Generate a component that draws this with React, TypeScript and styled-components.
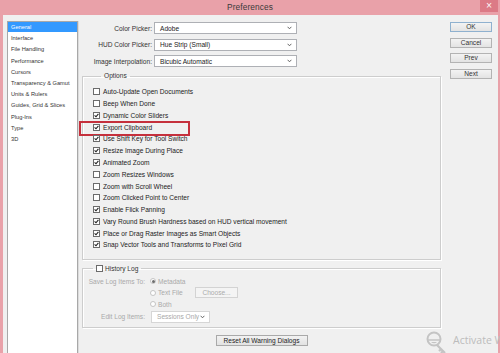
import React from 'react';
import styled, { createGlobalStyle } from 'styled-components';

const Global = createGlobalStyle`
  html, body { margin: 0; padding: 0; }
  body {
    width: 500px; height: 353px; overflow: hidden;
    background: #e9a1a9;
    font-family: "Liberation Sans", Arial, sans-serif;
  }
`;

const Window = styled.div`
  width: 500px; height: 353px; position: relative; overflow: hidden;
  display: flex; flex-direction: column; background: #e9a1a9;
`;

const TitleBar = styled.div`
  height: 15px; flex: none;
  display: grid; grid-template-columns: 1fr auto 1fr; align-items: start;
`;

const Title = styled.div`
  grid-column: 2; font-size: 8.3px; color: #3a3a3a; line-height: 15px; letter-spacing: 0.1px;
`;

const CloseBtn = styled.div`
  grid-column: 3; justify-self: end; margin-right: 2px;
  width: 18px; height: 12px; background: #dc7a86; color: #fff;
  font-size: 8px; line-height: 11px; text-align: center; font-family: "DejaVu Sans", sans-serif;
`;

const Body = styled.div`
  flex: 1; min-height: 0; margin: 0 2px 0 3px;
  background: #f0f0f0; display: flex; padding: 6px 0 0 4px;
`;

const Sidebar = styled.div`
  width: 69px; flex: none; background: #fff; border: 1px solid #a8a8a8;
  border-bottom: none; display: flex; flex-direction: column; gap: 1.2px;
  box-shadow: 1px 0 0 #dcdcdc;
`;

const SideItem = styled.div<{ $sel?: boolean }>`
  height: 10px; line-height: 10px; font-size: 5.7px; padding-left: 3px;
  color: ${p => (p.$sel ? '#fff' : '#333')};
  background: ${p => (p.$sel ? '#3399ff' : 'transparent')};
  white-space: nowrap;
`;

const Main = styled.div`
  width: 359px; flex: none; margin-left: 4px; padding-top: 1px;
  display: flex; flex-direction: column;
`;

const FieldRow = styled.div`
  display: grid; grid-template-columns: 70px 143px; column-gap: 2px;
  align-items: center; height: 12px; margin-bottom: 4.5px;
`;

const FieldLabel = styled.div`
  text-align: right; font-size: 6.6px; color: #333; white-space: nowrap;
`;

const Select = styled.div<{ $disabled?: boolean; $w?: number }>`
  height: 12px; box-sizing: border-box; background: #fff;
  border: 1px solid ${p => (p.$disabled ? '#d6d6d6' : '#aeb0b5')};
  display: flex; align-items: center; justify-content: space-between;
  padding: 0 4px 0 5px; font-size: 6.6px;
  color: ${p => (p.$disabled ? '#a8a8a8' : '#222')};
  width: ${p => (p.$w ? `${p.$w}px` : 'auto')};
`;

const Group = styled.fieldset<{ $top: number }>`
  margin: ${p => p.$top}px 0 0 0; min-width: 0;
  border: 1px solid #cdcdcd; box-shadow: inset 1px 1px 0 #fff, 1px 1px 0 #fff;
  box-sizing: border-box;
`;

const OptionsGroup = styled(Group)`
  padding: 6px 0 8px 10px;
`;

const HistoryGroup = styled(Group)`
  padding: 3px 0 3.5px 0;
`;

const Legend = styled.legend<{ $ml: number }>`
  margin-left: ${p => p.$ml}px; padding: 0 3px; font-size: 6.6px; color: #333;
  line-height: 8px; height: 8px; display: flex; align-items: center; gap: 2px;
`;

const CheckRow = styled.div<{ $hl?: boolean }>`
  position: relative; display: flex; align-items: center; gap: 3px;
  height: 11.77px; font-size: 6.6px; color: #222; white-space: nowrap;
  ${p =>
    p.$hl &&
    `&::before {
      content: ''; position: absolute; left: -14px; top: -0.5px;
      width: 107px; height: 11px; border: 2px solid #c5303c;
    }`}
`;

const BoxEl = styled.span`
  width: 7px; height: 7px; box-sizing: border-box; flex: none;
  border: 1px solid #6b6b6b; background: #fff;
  display: inline-flex; align-items: center; justify-content: center;
`;

const Check = ({ on }: { on: boolean }) => (
  <BoxEl>
    {on && (
      <svg width="5" height="5" viewBox="0 0 5 5">
        <path d="M0.6 2.4 L2 3.8 L4.4 0.8" fill="none" stroke="#222" strokeWidth="1.1" />
      </svg>
    )}
  </BoxEl>
);

const HistGrid = styled.div`
  display: grid; grid-template-columns: 62px 40px auto 1fr; column-gap: 5px;
  grid-template-rows: 11.5px 11.5px 11.5px 13px; align-items: center;
  font-size: 6.6px; color: #a9a9a9; white-space: nowrap;
`;

const HistLabel = styled.div`
  text-align: right; grid-column: 1;
`;

const RadioItem = styled.div`
  grid-column: 2; display: flex; align-items: center; gap: 2px;
`;

const RadioDot = styled.span<{ $on?: boolean }>`
  width: 6px; height: 6px; border-radius: 50%; box-sizing: border-box; flex: none;
  border: 1px solid #c4c4c4; background: #fff;
  display: inline-flex; align-items: center; justify-content: center;
  &::after {
    content: ''; width: 3px; height: 3px; border-radius: 50%;
    background: ${p => (p.$on ? '#6e6e6e' : 'transparent')};
  }
`;

const ChooseBtn = styled.div`
  grid-column: 3; width: 43px; height: 11px; box-sizing: border-box;
  border: 1px solid #d3d3d3; background: #f4f4f4; text-align: center;
  line-height: 9px; color: #ababab;
`;

const SessionSelect = styled(Select)`
  grid-column: 2 / span 3; margin-left: 1px;
`;

const ResetBtn = styled.div`
  align-self: center; margin-top: 7px; width: 92px; height: 11px; box-sizing: border-box;
  border: 1px solid #a9a9a9; background: linear-gradient(#f2f2f2, #e2e2e2);
  font-size: 6.6px; color: #222; text-align: center; line-height: 9px;
`;

const ButtonCol = styled.div`
  width: 42px; flex: none; margin-left: 9px; padding-top: 1px;
  display: flex; flex-direction: column; gap: 5.6px;
`;

const DlgBtn = styled.div<{ $def?: boolean }>`
  height: 10px; box-sizing: border-box;
  border: 1px solid ${p => (p.$def ? '#8fb1cf' : '#b3b3b3')};
  background: linear-gradient(#f3f3f3, #e3e3e3);
  font-size: 6.6px; color: #333; text-align: center; line-height: 8px;
`;

const Watermark = styled.div`
  position: absolute; left: 423px; top: 331px; display: flex; align-items: flex-start; gap: 6px;
  color: #bcbcbc; font-family: "Open Sans", "Liberation Sans", sans-serif;
  font-size: 10.5px; line-height: 12px; white-space: nowrap; pointer-events: none;
`;

const WMText = styled.div`
  margin-top: 3px;
`;

const Chevron = () => (
  <svg width="5" height="4" viewBox="0 0 5 4">
    <path d="M0.6 0.8 L2.5 2.8 L4.4 0.8" fill="none" stroke="#555" strokeWidth="0.9" />
  </svg>
);

const sideItems = [
  'General', 'Interface', 'File Handling', 'Performance', 'Cursors',
  'Transparency & Gamut', 'Units & Rulers', 'Guides, Grid & Slices', 'Plug-Ins', 'Type', '3D',
];

const options: [string, boolean][] = [
  ['Auto-Update Open Documents', false],
  ['Beep When Done', false],
  ['Dynamic Color Sliders', true],
  ['Export Clipboard', true],
  ['Use Shift Key for Tool Switch', true],
  ['Resize Image During Place', true],
  ['Animated Zoom', true],
  ['Zoom Resizes Windows', false],
  ['Zoom with Scroll Wheel', false],
  ['Zoom Clicked Point to Center', false],
  ['Enable Flick Panning', true],
  ['Vary Round Brush Hardness based on HUD vertical movement', true],
  ['Place or Drag Raster Images as Smart Objects', true],
  ['Snap Vector Tools and Transforms to Pixel Grid', true],
];

export default function App() {
  return (
    <Window>
      <Global />
      <TitleBar>
        <Title>Preferences</Title>
        <CloseBtn>×</CloseBtn>
      </TitleBar>
      <Body>
        <Sidebar>
          {sideItems.map((s, i) => (
            <SideItem key={s} $sel={i === 0}>{s}</SideItem>
          ))}
        </Sidebar>
        <Main>
          <FieldRow>
            <FieldLabel>Color Picker:</FieldLabel>
            <Select>Adobe<Chevron /></Select>
          </FieldRow>
          <FieldRow>
            <FieldLabel>HUD Color Picker:</FieldLabel>
            <Select>Hue Strip (Small)<Chevron /></Select>
          </FieldRow>
          <FieldRow>
            <FieldLabel>Image Interpolation:</FieldLabel>
            <Select>Bicubic Automatic<Chevron /></Select>
          </FieldRow>
          <OptionsGroup $top={0.5}>
            <Legend $ml={8}>Options</Legend>
            {options.map(([t, on]) => (
              <CheckRow key={t} $hl={t === 'Export Clipboard'}>
                <Check on={on} />
                {t}
              </CheckRow>
            ))}
          </OptionsGroup>
          <HistoryGroup $top={5}>
            <Legend $ml={10}>
              <Check on={false} />
              History Log
            </Legend>
            <HistGrid>
              <HistLabel>Save Log Items To:</HistLabel>
              <RadioItem><RadioDot $on />Metadata</RadioItem>
              <span />
              <span />
              <span />
              <RadioItem><RadioDot />Text File</RadioItem>
              <ChooseBtn>Choose...</ChooseBtn>
              <span />
              <span />
              <RadioItem><RadioDot />Both</RadioItem>
              <span />
              <span />
              <HistLabel>Edit Log Items:</HistLabel>
              <SessionSelect $disabled $w={59}>Sessions Only<Chevron /></SessionSelect>
            </HistGrid>
          </HistoryGroup>
          <ResetBtn>Reset All Warning Dialogs</ResetBtn>
        </Main>
        <ButtonCol>
          <DlgBtn $def>OK</DlgBtn>
          <DlgBtn>Cancel</DlgBtn>
          <DlgBtn>Prev</DlgBtn>
          <DlgBtn>Next</DlgBtn>
        </ButtonCol>
      </Body>
      <Watermark>
        <svg width="24" height="24" viewBox="0 0 24 24">
          <circle cx="11" cy="8" r="6.5" fill="none" stroke="#c4c4c4" strokeWidth="2" />
          <path d="M5 9 H17" stroke="#c4c4c4" strokeWidth="1.5" />
          <path d="M8 11 A4 4 0 0 0 14 11 Z" fill="#c4c4c4" />
          <path d="M14 14 L22 22 M18 18 L16 20 M20 20 L18 22" stroke="#c4c4c4" strokeWidth="2.2" fill="none" />
        </svg>
        <WMText>Activate Windows</WMText>
      </Watermark>
    </Window>
  );
}
